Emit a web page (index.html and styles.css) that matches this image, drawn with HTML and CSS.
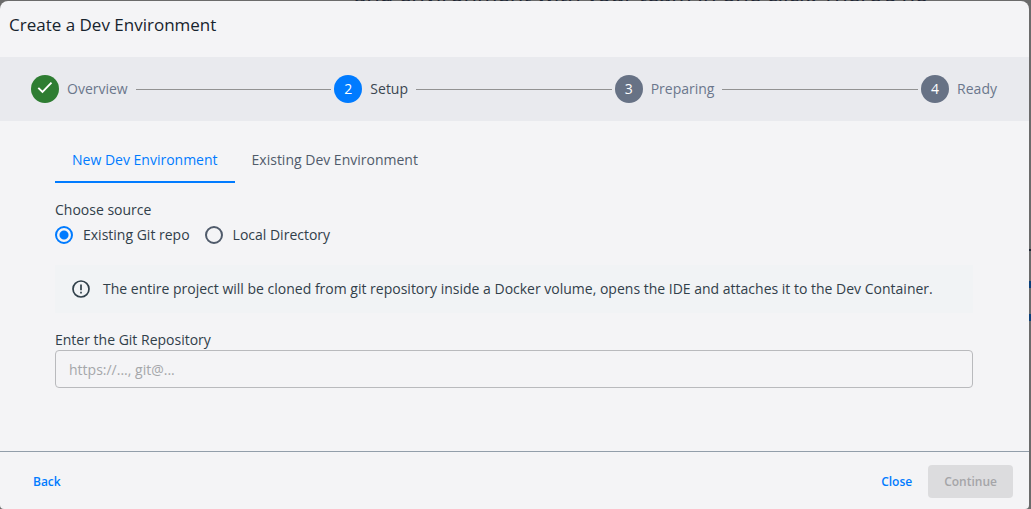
FILE: index.html
```html
<!DOCTYPE html>
<html lang="en">
<head>
<meta charset="utf-8">
<title>Create a Dev Environment</title>
<link rel="stylesheet" href="styles.css">
</head>
<body>
<p class="backdrop-text" aria-hidden="true">and environment with your team in one click. There’s no</p>
<div class="backdrop-edge" aria-hidden="true"></div>
<main class="dialog" role="dialog" aria-labelledby="dialog-title">
  <h1 class="title" id="dialog-title">Create a Dev Environment</h1>
  <ol class="stepper">
    <li class="step">
      <span class="badge badge-done">
        <svg width="28" height="28" viewBox="0 0 28 28" fill="none" stroke="#fff" stroke-width="1.9" aria-hidden="true"><path d="M7.3 12.8 11.5 17 20.5 7.7"/></svg>
      </span>
      <span class="step-name">Overview</span>
    </li>
    <li class="step step-current" aria-current="step"><span class="badge">2</span><span class="step-name">Setup</span></li>
    <li class="step"><span class="badge">3</span><span class="step-name">Preparing</span></li>
    <li class="step"><span class="badge">4</span><span class="step-name">Ready</span></li>
  </ol>
  <section class="content">
    <div class="tabs" role="tablist">
      <button class="tab tab-active" type="button" role="tab" aria-selected="true">New Dev Environment</button>
      <button class="tab" type="button" role="tab" aria-selected="false">Existing Dev Environment</button>
    </div>
    <fieldset class="source">
      <legend class="label">Choose source</legend>
      <div class="options">
        <label class="option"><input class="radio" type="radio" name="source" checked>Existing Git repo</label>
        <label class="option"><input class="radio" type="radio" name="source">Local Directory</label>
      </div>
    </fieldset>
    <div class="notice">
      <svg class="notice-icon" width="18" height="18" viewBox="0 0 18 18" fill="none" stroke="#31404a" aria-hidden="true"><circle cx="9" cy="9" r="8" stroke-width="1.7"/><path d="M9 4.5v5.8M9 11.7v1.8" stroke-width="1.7"/></svg>
      <p class="notice-text">The entire project will be cloned from git repository inside a Docker volume, opens the IDE and attaches it to the Dev Container.</p>
    </div>
    <label class="label" for="repo">Enter the Git Repository</label>
    <input class="field" id="repo" type="text" placeholder="https://..., git@...">
  </section>
  <footer class="footer">
    <button class="text-button back" type="button">Back</button>
    <button class="text-button" type="button">Close</button>
    <button class="continue" type="button" disabled>Continue</button>
  </footer>
</main>
</body>
</html>
```

FILE: styles.css
```css
* {
  box-sizing: border-box;
}

body {
  margin: 0;
  min-height: 100vh;
  display: flex;
  padding: 1px 2px 0 0;
  background: #6b6b6b;
  color: #31404a;
  font-family: "Open Sans", sans-serif;
  font-size: 14px;
  line-height: 20px;
  overflow: hidden;
}

button,
input {
  font: inherit;
}

.backdrop-text {
  position: absolute;
  top: -20px;
  left: 354px;
  margin: 0;
  color: #1c2433;
  font-size: 22px;
  line-height: 26px;
  white-space: nowrap;
}

/* Ends of the page's content that show past the dialog's right side */
.backdrop-edge {
  position: absolute;
  top: 249px;
  right: 0;
  width: 2px;
  height: 72px;
  background:
    linear-gradient(#1c2433, #1c2433) 0 0 / 2px 2px no-repeat,
    linear-gradient(#0b3f78, #0b3f78) 0 32px / 2px 7px no-repeat,
    linear-gradient(#0b3f78, #0b3f78) 0 65px / 2px 7px no-repeat;
}

.dialog {
  position: relative;
  flex: 1;
  display: flex;
  flex-direction: column;
  border-radius: 8px 8px 4px 4px;
  background: #f4f4f6;
  overflow: hidden;
}

.title {
  margin: 0;
  padding: 12px 9px 20px;
  color: #17232d;
  font-size: 17px;
  font-weight: 400;
  line-height: 24px;
}

.stepper {
  display: flex;
  margin: 0;
  padding: 18px 32px 18px 31px;
  background: #e9eaee;
  list-style: none;
}

.step {
  display: flex;
  flex: 1 1 auto;
  align-items: center;
  color: #6b778c;
}

.step:last-child {
  flex: none;
}

.step:not(:last-child)::after {
  content: "";
  flex: 1;
  margin: 0 3px 0 8px;
  border-top: 1px solid #929292;
}

.badge {
  display: grid;
  place-items: center;
  width: 28px;
  height: 28px;
  margin-right: 8px;
  border-radius: 50%;
  background: #677285;
  color: #fff;
}

.badge-done {
  background: #2e7d32;
}

.step-current {
  color: #3a4650;
}

.step-current .badge {
  background: #007bff;
}

.content {
  flex: 1;
  padding: 16px 56px 0 55px;
}

.tabs {
  display: flex;
}

.tab {
  padding: 13px 17px 11px;
  border: 0;
  border-bottom: 2px solid transparent;
  background: none;
  color: #505b6b;
}

.tab-active {
  border-color: #007bff;
  color: #007bff;
}

.source {
  margin: 17px 0 0;
  padding: 0;
  border: 0;
}

.label {
  display: block;
  padding: 0;
}

.options {
  display: flex;
  gap: 15px;
  padding-top: 5px;
}

.option {
  display: flex;
  align-items: center;
  gap: 10px;
}

.radio {
  appearance: none;
  width: 18px;
  height: 18px;
  margin: 0;
  border: 2px solid #505b6b;
  border-radius: 50%;
}

.radio:checked {
  border-color: #007bff;
  background: radial-gradient(circle, #007bff 4px, transparent 5px);
}

.notice {
  display: flex;
  align-items: center;
  gap: 13px;
  margin: 20px 0 17px;
  padding: 14px 17px;
  background: #f1f3f5;
}

.notice-icon {
  flex: none;
}

.notice-text {
  margin: 0;
}

.field {
  display: block;
  width: 100%;
  height: 38px;
  padding: 0 13px;
  border: 1px solid #b9babd;
  border-radius: 4px;
  background: transparent;
  color: inherit;
}

.field::placeholder {
  color: #a5a7aa;
}

.footer {
  display: flex;
  align-items: center;
  padding: 13px 16px 11px 17px;
  border-top: 1px solid #929eaa;
  font-size: 12px;
}

.text-button,
.continue {
  padding: 6px 16px;
  border: 0;
  border-radius: 4px;
  background: none;
  color: #007bff;
  font-weight: 600;
  line-height: 21px;
}

.back {
  margin-right: auto;
}

.continue {
  background: #dcdcde;
  color: #a5a5a8;
}
```
